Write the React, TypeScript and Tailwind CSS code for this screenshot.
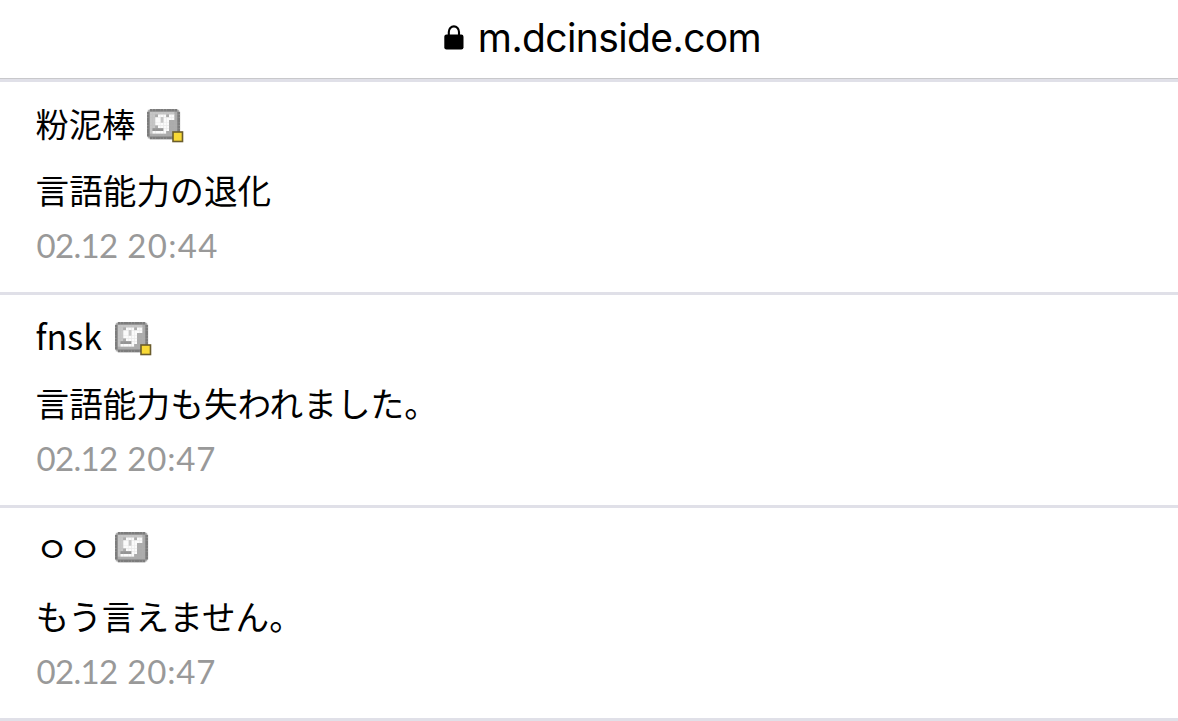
import React from "react";

interface Comment {
  id: number;
  author: string;
  script: "cjk" | "latin" | "jamo";
  badge: "fixed" | "plain";
  text: string;
  date: string;
  time: string;
}

const comments: Comment[] = [
  { id: 1, author: "粉泥棒", script: "cjk", badge: "fixed", text: "言語能力の退化", date: "02.12", time: "20:44" },
  { id: 2, author: "fnsk", script: "latin", badge: "fixed", text: "言語能力も失われました。", date: "02.12", time: "20:47" },
  { id: 3, author: "ㅇㅇ", script: "jamo", badge: "plain", text: "もう言えません。", date: "02.12", time: "20:47" },
];

const authorStyles = {
  cjk: "mr-3 pb-[6px] font-['Noto_Sans_CJK_JP',sans-serif] text-[33.3px]",
  latin: "mr-[13px] pb-[7px] font-['Noto_Sans_CJK_JP',sans-serif] text-[34px]",
  jamo: "mr-[13px] pb-1 font-['Noto_Sans_CJK_KR',sans-serif] text-[36px]",
};

// o = frame, l/m/d = face shades, w = letter
const badgePixels = [
  ".oooooooooo.",
  "olllllllllmo",
  "ollmwwwmwwmo",
  "ollwwlwwwwmo",
  "ollwwlwwmmmo",
  "ollwwwwwmmmo",
  "ollmwwwwmmmo",
  "olddddwwmmmo",
  "olwwwwwmmmmo",
  "ommmmmmmmmmo",
  ".oooooooooo.",
];

const badgeColors: Record<string, string> = {
  o: "#7c7c7c",
  l: "#c6c6c6",
  m: "#ababab",
  d: "#949494",
  w: "#fafafa",
};

const NickBadge = ({ fixed }: { fixed: boolean }) => (
  <svg width="37" height="34" viewBox="0 0 37 34">
    <rect x="0.8" y="0.8" width="31.4" height="28.6" fill="#b4b4b4" />
    {badgePixels.map((row, y) =>
      row
        .split("")
        .map((p, x) =>
          badgeColors[p] ? (
            <rect
              key={`${x}-${y}`}
              x={x * 2.75}
              y={y * 2.75}
              width="2.85"
              height="2.85"
              fill={badgeColors[p]}
            />
          ) : null,
        ),
    )}
    {fixed && (
      <rect x="26" y="23" width="9.5" height="9.5" fill="#f8d936" stroke="#6b5d2c" strokeWidth="1.6" />
    )}
  </svg>
);

const LockIcon = () => (
  <svg width="20" height="25" viewBox="0 0 20 25">
    <path d="M4.8 12V7a5.1 5.6 0 0 1 10.2 0v5" fill="none" stroke="#000" strokeWidth="2.1" />
    <rect x="0.3" y="9.5" width="19.2" height="15" rx="2.2" fill="#000" />
  </svg>
);

const CommentRow = ({ comment }: { comment: Comment }) => (
  <li className="h-[213px] border-b-[3px] border-[#e0e0e8] pl-[35.5px]">
    <div className={comment.script === "jamo" ? "flex h-[85px] items-center pb-[3px]" : "flex h-[85px] items-center pt-[3px]"}>
      <span className={`leading-none ${authorStyles[comment.script]}`}>{comment.author}</span>
      <NickBadge fixed={comment.badge === "fixed"} />
    </div>
    <p className="h-[51px] font-['Noto_Sans_CJK_JP',sans-serif] text-[33.6px] leading-[46px] tracking-[0.1px]">
      {comment.text}
    </p>
    <p className="flex gap-[10px] pl-px font-['Lato',sans-serif] text-[33px] leading-[54px] text-[#999]">
      <span className="tracking-[-0.7px]">{comment.date}</span>
      <span className={comment.time.endsWith("7") ? "tracking-[0.8px]" : "tracking-[1.3px]"}>
        {comment.time}
      </span>
    </p>
  </li>
);

export default function App() {
  return (
    <div className="h-[721px] w-[1178px] overflow-hidden bg-white text-black">
      <header className="flex h-[82px] items-center justify-center gap-[14px] border-b-[3px] border-[#e0e0e8] pb-[5px] pl-[27px] shadow-[inset_0_-1px_0_#c8c8cb]">
        <LockIcon />
        <span className="font-['Inter',sans-serif] text-[39px] leading-none tracking-[-0.6px]">
          m.dcinside.com
        </span>
      </header>
      <ul>
        {comments.map((comment) => (
          <CommentRow key={comment.id} comment={comment} />
        ))}
      </ul>
    </div>
  );
}
